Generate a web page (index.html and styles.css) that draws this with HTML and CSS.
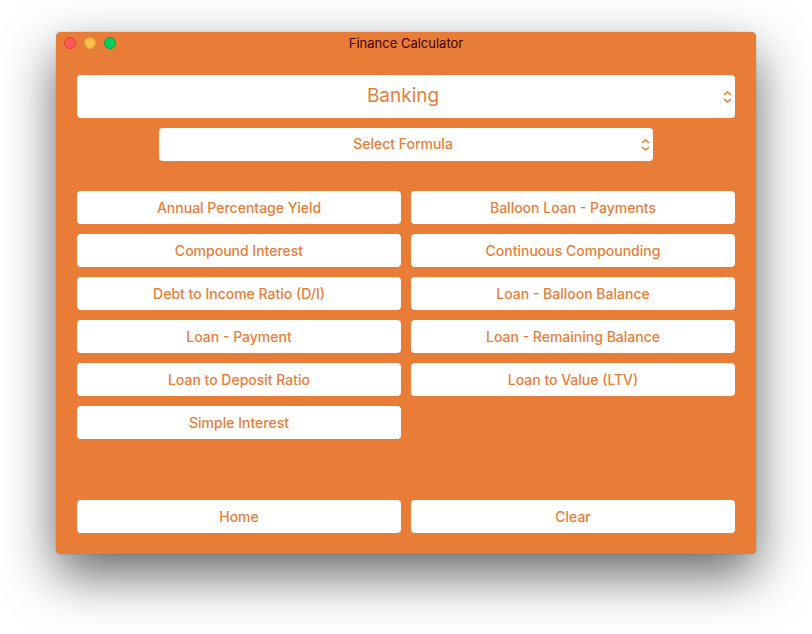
FILE: index.html
```html
<!DOCTYPE html>
<html lang="en">
<head>
<meta charset="utf-8">
<meta name="viewport" content="width=device-width, initial-scale=1">
<title>Finance Calculator</title>
<link rel="stylesheet" href="styles.css">
</head>
<body>
<main class="window">
  <header class="titlebar">
    <div class="lights">
      <button class="light close" type="button" aria-label="Close"></button>
      <button class="light minimize" type="button" aria-label="Minimize"></button>
      <button class="light zoom" type="button" aria-label="Zoom"></button>
    </div>
    <h1 class="title">Finance Calculator</h1>
  </header>
  <div class="content">
    <div class="picker picker-large">
      <select class="select" aria-label="Category"><option>Banking</option></select>
      <svg class="arrows" viewBox="0 0 9 12" aria-hidden="true"><path d="M1 4 4.5 1 8 4M1 8 4.5 11 8 8"/></svg>
    </div>
    <div class="picker picker-small">
      <select class="select" aria-label="Formula"><option>Select Formula</option></select>
      <svg class="arrows" viewBox="0 0 9 12" aria-hidden="true"><path d="M1 4 4.5 1 8 4M1 8 4.5 11 8 8"/></svg>
    </div>
    <section class="grid formulas" aria-label="Formulas">
      <button class="button" type="button">Annual Percentage Yield</button>
      <button class="button" type="button">Balloon Loan - Payments</button>
      <button class="button" type="button">Compound Interest</button>
      <button class="button" type="button">Continuous Compounding</button>
      <button class="button" type="button">Debt to Income Ratio (D/I)</button>
      <button class="button" type="button">Loan - Balloon Balance</button>
      <button class="button" type="button">Loan - Payment</button>
      <button class="button" type="button">Loan - Remaining Balance</button>
      <button class="button" type="button">Loan to Deposit Ratio</button>
      <button class="button" type="button">Loan to Value (LTV)</button>
      <button class="button" type="button">Simple Interest</button>
    </section>
    <footer class="grid actions">
      <button class="button" type="button">Home</button>
      <button class="button" type="button">Clear</button>
    </footer>
  </div>
</main>
</body>
</html>
```
FILE: styles.css
```css
:root {
  --orange: #e97d37;
}

* {
  box-sizing: border-box;
}

body {
  margin: 0;
  padding: 32px 56px 80px;
  background: #fff;
  font-family: Inter, "Liberation Sans", sans-serif;
}

.window {
  background: var(--orange);
  border-radius: 5px;
  box-shadow: 0 0 1px rgba(0, 0, 0, 0.5), 0 21px 52px rgba(0, 0, 0, 0.6);
}

.titlebar {
  display: grid;
  grid-template-columns: 1fr auto 1fr;
  align-items: center;
  height: 22px;
  padding: 0 8px;
}

.lights {
  display: flex;
  gap: 8px;
}

.light {
  width: 12px;
  height: 12px;
  padding: 0;
  border: 1px solid;
  border-radius: 50%;
}

.close {
  background: #ff5a5a;
  border-color: #e8383b;
}

.minimize {
  background: #ffbd4c;
  border-color: #e2a03a;
}

.zoom {
  background: #00cf5a;
  border-color: #0aa348;
}

.title {
  margin: 0;
  color: #420000;
  font-size: 13px;
  font-weight: 400;
}

.content {
  display: flex;
  flex-direction: column;
  padding: 21px;
}

.picker {
  position: relative;
}

.picker-small {
  width: 75%;
  margin: 10px auto 0;
}

.select,
.button {
  display: block;
  width: 100%;
  height: 33px;
  border: 0;
  border-radius: 4px;
  background: #fff;
  color: var(--orange);
  font-family: inherit;
  font-size: 14px;
  font-weight: 500;
}

.select {
  appearance: none;
  padding: 0 6px 2px 0;
  text-align: center;
  text-align-last: center;
}

.button {
  padding: 0;
}

.picker-large .select {
  height: 43px;
  font-size: 19px;
  font-weight: 400;
}

.arrows {
  position: absolute;
  top: calc(50% - 6px);
  right: 3px;
  width: 9px;
  height: 12px;
  fill: none;
  stroke: var(--orange);
  stroke-width: 1.6;
  pointer-events: none;
}

.grid {
  display: grid;
  grid-template-columns: 1fr 1fr;
  gap: 10px;
}

.formulas {
  margin-top: 30px;
}

.actions {
  margin-top: 61px;
}
```
